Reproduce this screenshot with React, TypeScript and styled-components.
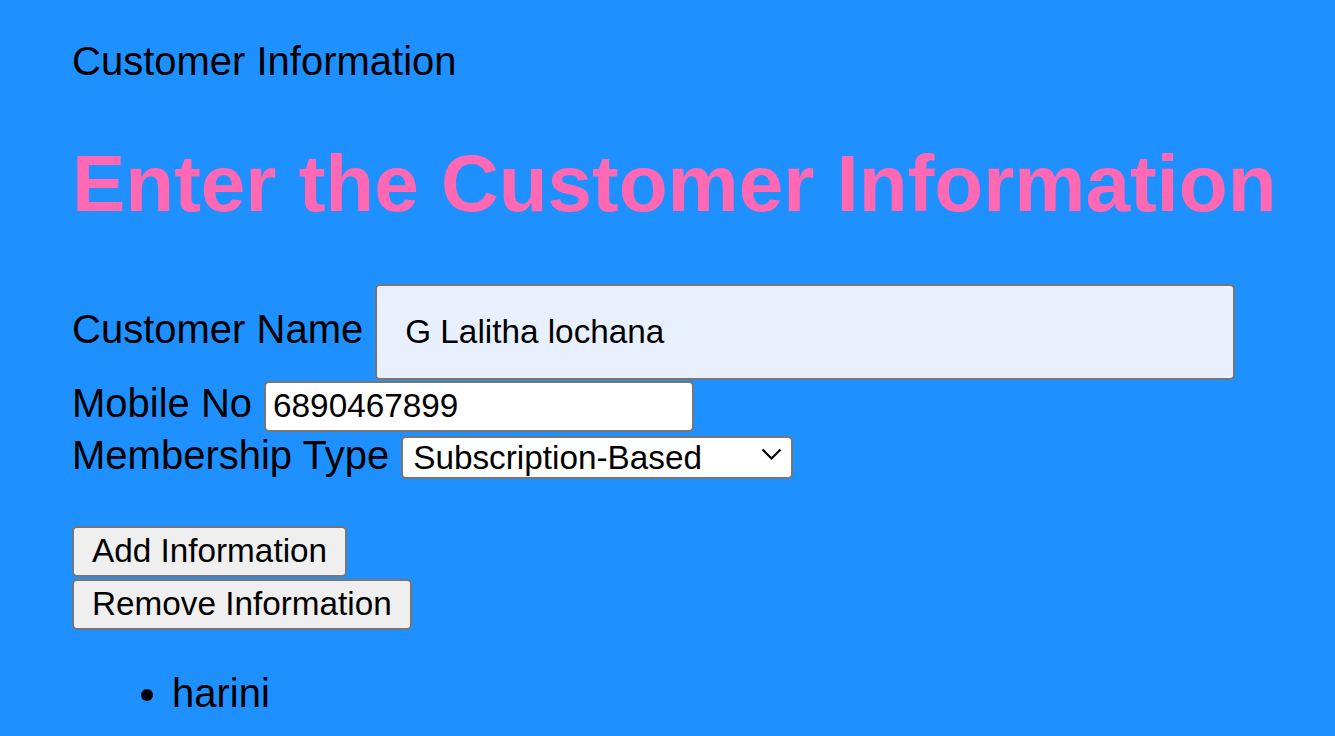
import React, { useState } from 'react';
import styled, { createGlobalStyle } from 'styled-components';

const GlobalStyle = createGlobalStyle`
  html, body {
    margin: 0;
    padding: 0;
    background: #1e90ff;
  }

  body {
    font-family: 'Liberation Sans', Arial, sans-serif;
    color: #000;
  }
`;

const Page = styled.div`
  padding: 38px 0 40px 72px;
  min-height: 736px;
  box-sizing: border-box;
  background: #1e90ff;
  font-size: 40px;
`;

const TopTitle = styled.div`
  font-size: 40px;
  line-height: 46px;
`;

const Heading = styled.h1`
  margin: 54px 0 0 0;
  font-size: 80px;
  line-height: 92px;
  font-weight: bold;
  white-space: nowrap;
  color: #ff69b4;
`;

const Form = styled.form`
  margin-top: 54px;
  display: flex;
  flex-direction: column;
`;

const Row = styled.div`
  display: flex;
  align-items: baseline;
  gap: 12px;
`;

const Label = styled.label`
  font-size: 40px;
  line-height: 46px;
  white-space: nowrap;
`;

const TextInput = styled.input<{ $big?: boolean; $width: number }>`
  box-sizing: border-box;
  width: ${p => p.$width}px;
  height: ${p => (p.$big ? 96 : 51)}px;
  padding: 0 ${p => (p.$big ? 28 : 7)}px;
  font-family: 'Liberation Sans', Arial, sans-serif;
  font-size: 33.3px;
  color: #000;
  background: ${p => (p.$big ? '#e8f0fe' : '#fff')};
  border: 2px solid #767676;
  border-radius: 5px;
  outline: none;
`;

const SelectWrap = styled.span`
  position: relative;
  display: inline-block;
`;

const Select = styled.select`
  appearance: none;
  box-sizing: border-box;
  width: 392px;
  height: 43px;
  padding: 0 40px 0 10px;
  font-family: 'Liberation Sans', Arial, sans-serif;
  font-size: 33.3px;
  color: #000;
  background: #fff;
  border: 2px solid #767676;
  border-radius: 5px;
  outline: none;
`;

const Chevron = styled.svg`
  position: absolute;
  right: 11px;
  top: 15px;
  pointer-events: none;
`;

const Buttons = styled.div`
  margin-top: 47px;
  display: flex;
  flex-direction: column;
  align-items: flex-start;
  gap: 2px;
`;

const Button = styled.button`
  box-sizing: border-box;
  height: 51px;
  padding: 0 18px;
  font-family: 'Liberation Sans', Arial, sans-serif;
  font-size: 33.3px;
  color: #000;
  background: #efefef;
  border: 2px solid #767676;
  border-radius: 5px;
  cursor: pointer;
`;

const List = styled.ul`
  margin: 40px 0 0 0;
  padding-left: 100px;
  font-size: 40px;
  line-height: 46px;
`;

export default function App() {
  const [name, setName] = useState('G Lalitha lochana');
  const [mobile, setMobile] = useState('6890467899');
  const [type, setType] = useState('Subscription-Based');
  const [items, setItems] = useState<string[]>(['harini']);

  return (
    <Page>
      <GlobalStyle />
      <TopTitle>Customer Information</TopTitle>
      <Heading>Enter the Customer Information</Heading>

      <Form onSubmit={e => e.preventDefault()}>
        <Row>
          <Label htmlFor='cname'>Customer Name</Label>
          <TextInput
            id='cname'
            $big
            $width={860}
            value={name}
            onChange={e => setName(e.target.value)}
          />
        </Row>
        <Row>
          <Label htmlFor='mobile'>Mobile No</Label>
          <TextInput
            id='mobile'
            $width={430}
            value={mobile}
            onChange={e => setMobile(e.target.value)}
          />
        </Row>
        <Row>
          <Label htmlFor='mtype'>Membership Type</Label>
          <SelectWrap>
            <Select id='mtype' value={type} onChange={e => setType(e.target.value)}>
              <option>Subscription-Based</option>
              <option>Premium</option>
              <option>Basic</option>
            </Select>
            <Chevron width='21' height='13' viewBox='0 0 21 13'>
              <path d='M1.5 1.5 L10.5 10.5 L19.5 1.5' fill='none' stroke='#000' strokeWidth='2.2' />
            </Chevron>
          </SelectWrap>
        </Row>
      </Form>

      <Buttons>
        <Button onClick={() => setItems([...items, name])}>Add Information</Button>
        <Button onClick={() => setItems(items.slice(0, -1))}>Remove Information</Button>
      </Buttons>

      <List>
        {items.map((item, i) => (
          <li key={i}>{item}</li>
        ))}
      </List>
    </Page>
  );
}
